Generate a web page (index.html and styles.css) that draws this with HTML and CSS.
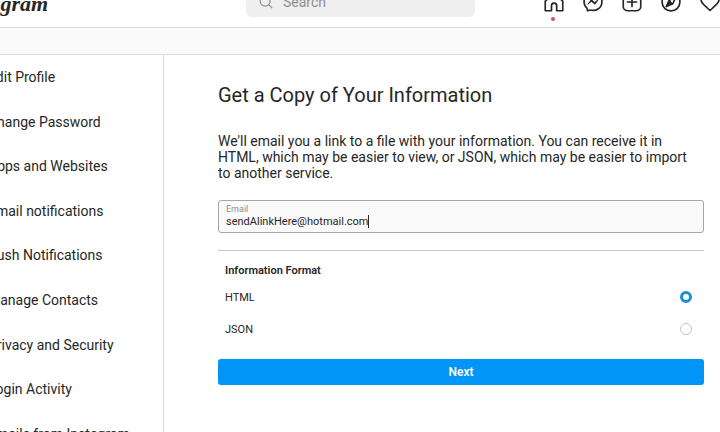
FILE: index.html
```html
<!DOCTYPE html>
<html lang="en">
<head>
    <meta charset="UTF-8">
    <meta name="viewport" content="width=device-width, initial-scale=1.0">
    <title>Get a Copy of Your Information</title>
    <link rel="stylesheet" href="styles.css">
</head>
<body>
    <header class="topbar">
        <a class="logo" href="#">Instagram</a>
        <div class="search">
            <svg viewBox="0 0 24 24" aria-hidden="true"><circle cx="10.500" cy="10.500" r="8.500"/><path d="M17 17l5.500 5.500"/></svg>
            <input type="search" placeholder="Search" aria-label="Search">
        </div>
        <nav class="icons">
            <a class="current" href="#" aria-label="Home">
                <svg viewBox="0 0 24 24"><path d="M9 22.500v-6a3 3 0 0 1 6.200 0v6h7.300V11L12 1.500 1.500 11v11.500z"/></svg>
            </a>
            <a href="#" aria-label="Messages">
                <svg viewBox="0 0 24 24"><path d="M12 1.300C6 1.300 1.300 5.700 1.300 11.600c0 3.100 1.300 5.800 3.300 7.600.5.400.4.700.5 2.300 0 .7.700 1.200 1.400.9 1.800-.8 1.900-.9 2.200-.8 7.400 2 14-2.700 14-10C22.700 5.700 18 1.300 12 1.300z"/><path class="bolt" d="M6 14.500l4-5.500 4 3.500 4.300-3.300-4 5.500-4.100-3.400z"/></svg>
            </a>
            <a href="#" aria-label="New post">
                <svg viewBox="0 0 24 24"><rect x="1.500" y="1.500" width="21" height="21" rx="5"/><path d="M12 6.500v11M6.500 12h11"/></svg>
            </a>
            <a href="#" aria-label="Explore">
                <svg viewBox="0 0 24 24"><circle cx="12" cy="12" r="10.700"/><path d="M17.500 6.500l-3.400 7.600-7.600 3.400 3.400-7.600z"/><path class="bolt" d="M9.900 9.900l4.200 4.200-7.600 3.400z"/></svg>
            </a>
            <a href="#" aria-label="Activity">
                <svg viewBox="0 0 24 24"><path d="M16.800 2.500c-2.300 0-3.800 1.400-4.800 3.200-1-1.800-2.500-3.200-4.800-3.200C3.800 2.500 1.200 5.400 1.200 9c0 4.400 4 7 7.300 9.900l3.500 3.300 3.500-3.300c3.300-2.900 7.300-5.500 7.300-9.900 0-3.600-2.600-6.500-6-6.500z"/></svg>
            </a>
        </nav>
    </header>

    <div class="settings">
        <ul class="menu">
            <li><a href="#">Edit Profile</a></li>
            <li><a href="#">Change Password</a></li>
            <li><a href="#">Apps and Websites</a></li>
            <li><a href="#">Email notifications</a></li>
            <li><a href="#">Push Notifications</a></li>
            <li><a href="#">Manage Contacts</a></li>
            <li><a href="#">Privacy and Security</a></li>
            <li><a href="#">Login Activity</a></li>
            <li><a href="#">Emails from Instagram</a></li>
        </ul>

        <main class="content">
            <h1>Get a Copy of Your Information</h1>
            <p>We'll email you a link to a file with your information. You can receive it in HTML, which may be easier to view, or JSON, which may be easier to import to another service.</p>
            <form>
                <div class="field">
                    <label for="email">Email</label>
                    <div class="field-value">
                        <input type="email" id="email" value="sendAlinkHere@hotmail.com">
                        <span class="caret"></span>
                    </div>
                </div>
                <fieldset class="format">
                    <legend>Information Format</legend>
                    <label for="html">HTML <input type="radio" name="format" id="html" checked></label>
                    <label for="json">JSON <input type="radio" name="format" id="json"></label>
                </fieldset>
                <button type="submit">Next</button>
            </form>
        </main>
    </div>
</body>
</html>
```
FILE: styles.css
```css
* {
    box-sizing: border-box;
}
body {
    margin: 0;
    font-family: Roboto, "Liberation Sans", sans-serif;
    font-size: 14px;
    color: #262626;
    background-color: #fafafa;
    overflow: hidden;
}
a {
    color: inherit;
    text-decoration: none;
}

/* Top bar, scrolled partly out of view */
.topbar {
    display: grid;
    grid-template-columns: 246px minmax(0, 1fr) 245px;
    align-items: center;
    height: 51px;
    margin-top: -23px;
    background-color: #fff;
    border-bottom: 1px solid #dbdbdb;
}
.logo {
    justify-self: start;
    margin-left: -46px;
    padding-top: 4px;
    font-family: "Liberation Serif", serif;
    font-size: 22px;
    font-style: italic;
    font-weight: bold;
}
.search {
    display: flex;
    align-items: center;
    gap: 10px;
    height: 30px;
    padding: 0 13px;
    background-color: #efefef;
    border-radius: 6px;
}
.search svg {
    flex: none;
    width: 14px;
    height: 14px;
    fill: none;
    stroke: #8e8e8e;
    stroke-width: 2;
}
.search input {
    flex: 1;
    min-width: 0;
    padding: 0;
    border: 0;
    background: none;
    font: inherit;
}
.search input::placeholder {
    color: #8e8e8e;
}
.icons {
    display: flex;
    gap: 19px;
    padding-left: 69px;
}
.icons a {
    position: relative;
    flex: none;
    height: 20px;
}
.icons svg {
    width: 20px;
    height: 20px;
    fill: none;
    stroke: #262626;
    stroke-width: 2;
    stroke-linejoin: round;
    stroke-linecap: round;
}
.icons .bolt {
    fill: #262626;
    stroke-width: 1;
}
.icons .current::after {
    content: "";
    position: absolute;
    left: 7px;
    top: 25px;
    width: 4px;
    height: 4px;
    border-radius: 50%;
    background-color: #d6515f;
}

/* Settings card */
.settings {
    display: grid;
    grid-template-columns: 164px 1fr;
    margin-top: 26px;
    background-color: #fff;
    border-top: 1px solid #dbdbdb;
}
.menu {
    display: grid;
    grid-auto-rows: 1fr;
    align-items: center;
    min-height: 401px;
    margin: 0;
    padding: 0;
    list-style: none;
    border-right: 1px solid #dbdbdb;
}
.menu a {
    margin-left: -12px;
    white-space: nowrap;
}
.content {
    padding: 28px 16px 0 54px;
}
h1 {
    margin: 0 0 26px;
    font-size: 20px;
    font-weight: 400;
    line-height: 24px;
}
p {
    margin: 0 0 19px;
    padding-right: 12px;
    line-height: 16px;
}
.field {
    height: 33px;
    padding: 3px 7px;
    background-color: #fafafa;
    border: 1px solid #a6a6a6;
    border-radius: 3px;
    font-size: 11px;
}
.field label {
    display: block;
    font-size: 9px;
    line-height: 11px;
    color: #8e8e8e;
}
.field-value {
    display: flex;
    align-items: center;
    height: 13px;
}
.field input {
    field-sizing: content;
    padding: 0;
    border: 0;
    outline: 0;
    background: none;
    font: inherit;
    color: inherit;
}
.caret {
    width: 1px;
    height: 13px;
    background-color: #262626;
}
.format {
    margin: 17px 0 0;
    padding: 12px 12px 0 7px;
    border: 0;
    border-top: 1px solid #c7c7c7;
    font-size: 11px;
}
.format legend {
    float: left;
    width: 100%;
    padding: 0;
    font-weight: 600;
    line-height: 16px;
}
.format label {
    display: flex;
    align-items: center;
    justify-content: space-between;
    clear: both;
    height: 32px;
}
.format legend + label {
    padding-top: 2px;
    height: 34px;
}
.format input {
    appearance: none;
    width: 12px;
    height: 12px;
    margin: 0;
    border: 1px solid #c7c7c7;
    border-radius: 50%;
    background-color: #fff;
}
.format input:checked {
    border: 3px solid #1a8fd8;
}
button {
    display: block;
    width: 100%;
    height: 26px;
    margin-top: 14px;
    padding: 0;
    border: 0;
    border-radius: 3px;
    background-color: #0095f6;
    color: #fff;
    font-family: inherit;
    font-size: 12px;
    font-weight: 600;
    cursor: pointer;
}
```
